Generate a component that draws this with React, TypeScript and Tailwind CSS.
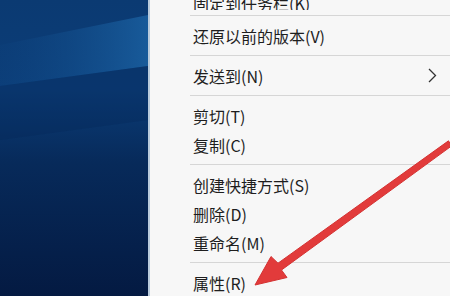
import React from 'react';

type Item = { label: string; sub?: boolean } | 'sep';

const items: Item[] = [
  'sep',
  { label: '还原以前的版本(V)' },
  'sep',
  { label: '发送到(N)', sub: true },
  'sep',
  { label: '剪切(T)' },
  { label: '复制(C)' },
  'sep',
  { label: '创建快捷方式(S)' },
  { label: '删除(D)' },
  { label: '重命名(M)' },
  'sep',
  { label: '属性(R)' },
];

function Wallpaper() {
  return (
    <svg className="absolute inset-0 h-full w-full" viewBox="0 0 148 296" preserveAspectRatio="none">
      <defs>
        <linearGradient id="base" x1="0" y1="0" x2="0" y2="1">
          <stop offset="0" stopColor="#0b3a72" />
          <stop offset="0.3" stopColor="#0b3d78" />
          <stop offset="0.55" stopColor="#072a5a" />
          <stop offset="1" stopColor="#041a42" />
        </linearGradient>
        <linearGradient id="beam" x1="0" y1="0" x2="1" y2="0">
          <stop offset="0" stopColor="#0f4784" stopOpacity="0.15" />
          <stop offset="1" stopColor="#1b62a3" stopOpacity="0.8" />
        </linearGradient>
      </defs>
      <rect width="148" height="296" fill="url(#base)" />
      <polygon points="0,45 148,15 148,66 0,86" fill="url(#beam)" />
      <polygon points="0,86 148,66 148,120 0,140" fill="#06295a" opacity="0.35" />
    </svg>
  );
}

export default function App() {
  return (
    <div
      className="relative flex h-[296px] w-[450px] overflow-hidden bg-[#f7f7f7]"
      style={{ fontFamily: '"Noto Sans CJK SC", "Noto Sans", sans-serif' }}
    >
      <div className="relative w-[148px] shrink-0">
        <Wallpaper />
      </div>
      <div className="w-[2px] shrink-0 bg-[#b9cbdc]" />

      <div className="flex-1 pl-[40px] text-[16px] text-[#1e1e1e]">
        <div className="flex h-[10px] items-end overflow-hidden pl-[3px]">
          <span className="mb-[-1px] leading-none">固定到任务栏(K)</span>
        </div>
        {items.map((it, i) =>
          it === 'sep' ? (
            <div key={i} className="my-[5px] h-px bg-[#d6d6d6]" />
          ) : (
            <div key={i} className="flex h-[29px] items-center pl-[3px] pr-[12px]">
              <span className="flex-1 leading-none">{it.label}</span>
              {it.sub && (
                <svg width="9" height="15" viewBox="0 0 9 15" className="mr-[1px]">
                  <path d="M1 1 L7.5 7.5 L1 14" fill="none" stroke="#333" strokeWidth="1.3" />
                </svg>
              )}
            </div>
          ),
        )}
      </div>

      <svg className="pointer-events-none absolute inset-0" width="450" height="296" viewBox="0 0 450 296">
        <polygon
          points="448.5,140.8 278,263.2 271,256.5 255,285 287,277.5 281.5,270 451.5,146"
          fill="#e23b3b"
          stroke="#d43232"
          strokeWidth="1"
          strokeLinejoin="round"
        />
      </svg>
    </div>
  );
}
